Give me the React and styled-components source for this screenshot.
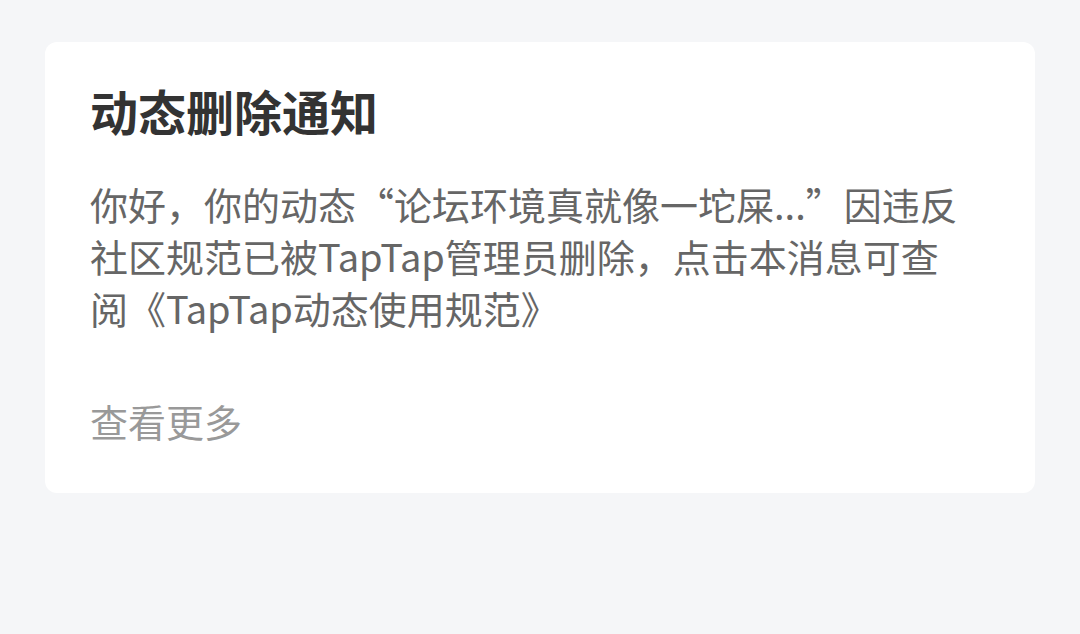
import React from 'react';
import styled, { createGlobalStyle } from 'styled-components';

const GlobalStyle = createGlobalStyle`
  html, body {
    margin: 0;
    padding: 0;
    background: #f5f6f8;
  }
  body {
    font-family: 'Noto Sans CJK SC', 'Noto Sans', sans-serif;
  }
`;

const Page = styled.div`
  min-height: 634px;
  padding: 42px 45px;
  box-sizing: border-box;
`;

const Card = styled.div`
  background: #ffffff;
  border-radius: 12px;
  padding: 36px 45px 46px 45px;
  display: flex;
  flex-direction: column;
`;

const Title = styled.h1`
  margin: 0;
  font-size: 48px;
  line-height: 64px;
  font-weight: 700;
  color: #333333;
`;

const Body = styled.p`
  margin: 36px 0 0 0;
  max-width: 878px;
  font-size: 38px;
  line-height: 52px;
  color: #666666;
`;

const More = styled.div`
  margin-top: 61px;
  font-size: 38px;
  line-height: 52px;
  color: #999999;
`;

const App = () => (
  <>
    <GlobalStyle />
    <Page>
      <Card>
        <Title>动态删除通知</Title>
        <Body>
          你好，你的动态“论坛环境真就像一坨屎...”因违反社区规范已被TapTap管理员删除，点击本消息可查阅《TapTap动态使用规范》
        </Body>
        <More>查看更多</More>
      </Card>
    </Page>
  </>
);

export default App;
